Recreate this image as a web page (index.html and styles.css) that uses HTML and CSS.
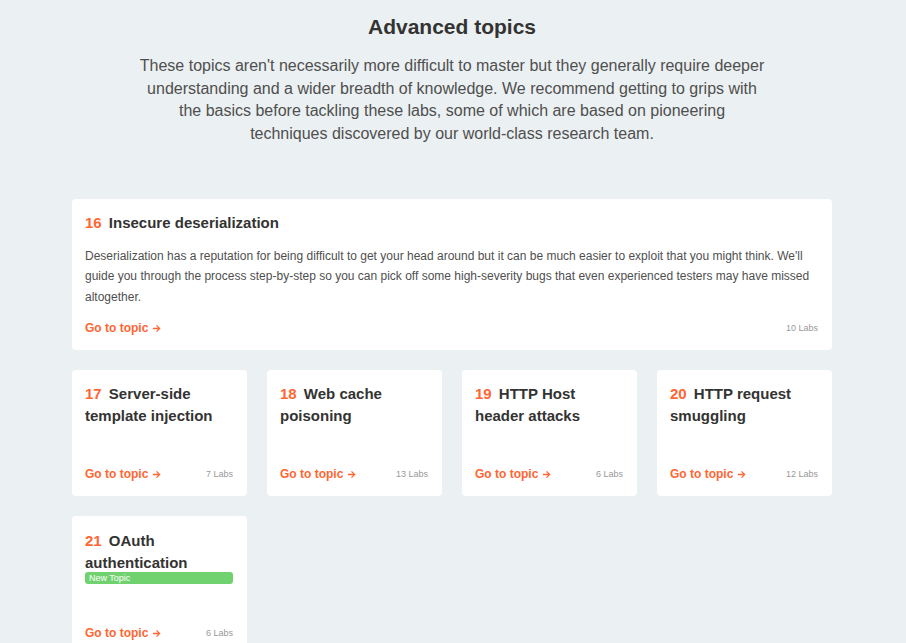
FILE: index.html
```html
<!DOCTYPE html>
<html lang="en">
<head>
<meta charset="utf-8">
<title>Advanced topics</title>
<link rel="stylesheet" href="styles.css">
</head>
<body>
<main class="page">
  <header class="intro">
    <h1 class="intro-title">Advanced topics</h1>
    <p class="intro-text">These topics aren't necessarily more difficult to master but they generally require deeper understanding and a wider breadth of knowledge. We recommend getting to grips with the basics before tackling these labs, some of which are based on pioneering techniques discovered by our world-class research team.</p>
  </header>

  <section class="grid">
    <article class="card card-wide">
      <h2 class="card-title"><span class="num">16</span> Insecure deserialization</h2>
      <p class="card-desc">Deserialization has a reputation for being difficult to get your head around but it can be much easier to exploit that you might think. We'll guide you through the process step-by-step so you can pick off some high-severity bugs that even experienced testers may have missed altogether.</p>
      <div class="card-foot">
        <a class="go" href="#">Go to topic <svg class="arrow" viewBox="0 0 10 10" width="9" height="9"><path d="M1 5h7.5M5 1.5 8.5 5 5 8.5" fill="none" stroke="currentColor" stroke-width="1.4"/></svg></a>
        <span class="labs">10 Labs</span>
      </div>
    </article>

    <article class="card">
      <h2 class="card-title"><span class="num">17</span> Server-side template injection</h2>
      <div class="card-foot">
        <a class="go" href="#">Go to topic <svg class="arrow" viewBox="0 0 10 10" width="9" height="9"><path d="M1 5h7.5M5 1.5 8.5 5 5 8.5" fill="none" stroke="currentColor" stroke-width="1.4"/></svg></a>
        <span class="labs">7 Labs</span>
      </div>
    </article>

    <article class="card">
      <h2 class="card-title"><span class="num">18</span> Web cache poisoning</h2>
      <div class="card-foot">
        <a class="go" href="#">Go to topic <svg class="arrow" viewBox="0 0 10 10" width="9" height="9"><path d="M1 5h7.5M5 1.5 8.5 5 5 8.5" fill="none" stroke="currentColor" stroke-width="1.4"/></svg></a>
        <span class="labs">13 Labs</span>
      </div>
    </article>

    <article class="card">
      <h2 class="card-title"><span class="num">19</span> HTTP Host header attacks</h2>
      <div class="card-foot">
        <a class="go" href="#">Go to topic <svg class="arrow" viewBox="0 0 10 10" width="9" height="9"><path d="M1 5h7.5M5 1.5 8.5 5 5 8.5" fill="none" stroke="currentColor" stroke-width="1.4"/></svg></a>
        <span class="labs">6 Labs</span>
      </div>
    </article>

    <article class="card">
      <h2 class="card-title"><span class="num">20</span> HTTP request smuggling</h2>
      <div class="card-foot">
        <a class="go" href="#">Go to topic <svg class="arrow" viewBox="0 0 10 10" width="9" height="9"><path d="M1 5h7.5M5 1.5 8.5 5 5 8.5" fill="none" stroke="currentColor" stroke-width="1.4"/></svg></a>
        <span class="labs">12 Labs</span>
      </div>
    </article>

    <article class="card card-new">
      <h2 class="card-title"><span class="num">21</span> OAuth authentication</h2>
      <span class="badge">New Topic</span>
      <div class="card-foot">
        <a class="go" href="#">Go to topic <svg class="arrow" viewBox="0 0 10 10" width="9" height="9"><path d="M1 5h7.5M5 1.5 8.5 5 5 8.5" fill="none" stroke="currentColor" stroke-width="1.4"/></svg></a>
        <span class="labs">6 Labs</span>
      </div>
    </article>
  </section>
</main>
</body>
</html>
```

FILE: styles.css
```css
* { box-sizing: border-box; }

html, body {
  margin: 0;
  padding: 0;
  background: #ebf0f2;
  font-family: "Liberation Sans", Arial, sans-serif;
  color: #333332;
}

.page {
  width: 760px;
  margin: 0 0 0 calc(50% - 381px);
  padding: 14px 0 40px;
}

.intro {
  text-align: center;
}

.intro-title {
  margin: 0;
  font-size: 21px;
  line-height: 26px;
  font-weight: bold;
  color: #333332;
}

.intro-text {
  width: 626px;
  margin: 15px auto 0;
  font-size: 16px;
  line-height: 22.7px;
  color: #4f4f4f;
}

.grid {
  margin-top: 53px;
  display: grid;
  grid-template-columns: repeat(4, 1fr);
  gap: 20px;
  align-items: start;
}

.card {
  background: #fff;
  border-radius: 4px;
  padding: 13px 14px 13px 13px;
  display: flex;
  flex-direction: column;
  min-height: 126px;
}

.card-wide {
  grid-column: 1 / -1;
  min-height: 0;
}

.card-new {
  padding-top: 14px;
}

.card-title {
  margin: 0;
  font-size: 15px;
  line-height: 22px;
  font-weight: bold;
  color: #333332;
}

.num {
  color: #ff6633;
  margin-right: 3px;
}

.card-desc {
  margin: 12px 0 0;
  font-size: 12px;
  line-height: 20.5px;
  color: #4f4f4f;
}

.badge {
  display: block;
  margin-top: -2px;
  height: 12px;
  border-radius: 3px;
  background: #70d26f;
  color: #fff;
  font-size: 9px;
  line-height: 12px;
  padding: 0 4px;
}

.card-foot {
  display: flex;
  justify-content: space-between;
  align-items: center;
  margin-top: auto;
  padding-top: 38px;
  line-height: 18px;
}

.card-new .card-foot {
  padding-top: 40px;
}

.card-wide .card-foot {
  padding-top: 12px;
}

.go {
  color: #ff6633;
  font-size: 12px;
  font-weight: bold;
  text-decoration: none;
  display: inline-flex;
  align-items: center;
  gap: 4px;
}

.arrow {
  display: block;
}

.labs {
  font-size: 9px;
  color: #999;
}
```
